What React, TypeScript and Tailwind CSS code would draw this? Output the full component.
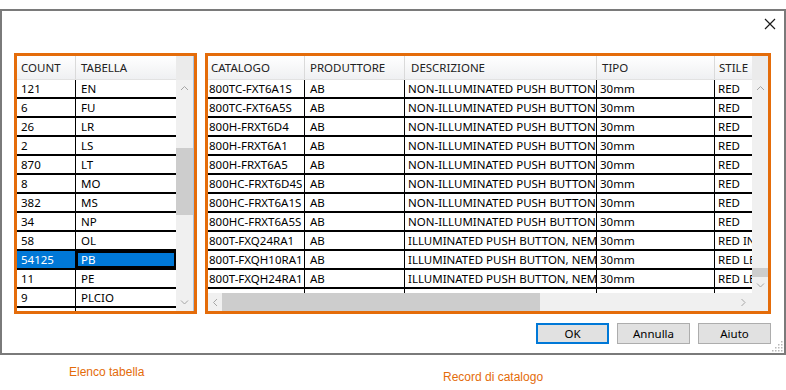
import React from "react";
import clsx from "clsx";

const tables = [
  ["121", "EN"],
  ["6", "FU"],
  ["26", "LR"],
  ["2", "LS"],
  ["870", "LT"],
  ["8", "MO"],
  ["382", "MS"],
  ["34", "NP"],
  ["58", "OL"],
  ["54125", "PB"],
  ["11", "PE"],
  ["9", "PLCIO"],
  ["4", "PS"],
];

const records = [
  ["800TC-FXT6A1S", "AB", "NON-ILLUMINATED PUSH BUTTON", "30mm", "RED"],
  ["800TC-FXT6A5S", "AB", "NON-ILLUMINATED PUSH BUTTON", "30mm", "RED"],
  ["800H-FRXT6D4", "AB", "NON-ILLUMINATED PUSH BUTTON", "30mm", "RED"],
  ["800H-FRXT6A1", "AB", "NON-ILLUMINATED PUSH BUTTON", "30mm", "RED"],
  ["800H-FRXT6A5", "AB", "NON-ILLUMINATED PUSH BUTTON", "30mm", "RED"],
  ["800HC-FRXT6D4S", "AB", "NON-ILLUMINATED PUSH BUTTON", "30mm", "RED"],
  ["800HC-FRXT6A1S", "AB", "NON-ILLUMINATED PUSH BUTTON", "30mm", "RED"],
  ["800HC-FRXT6A5S", "AB", "NON-ILLUMINATED PUSH BUTTON", "30mm", "RED"],
  ["800T-FXQ24RA1", "AB", "ILLUMINATED PUSH BUTTON, NEMA", "30mm", "RED INCANDESCENT"],
  ["800T-FXQH10RA1", "AB", "ILLUMINATED PUSH BUTTON, NEMA", "30mm", "RED LED"],
  ["800T-FXQH24RA1", "AB", "ILLUMINATED PUSH BUTTON, NEMA", "30mm", "RED LED"],
  ["800T-FXQ10RA1", "AB", "ILLUMINATED PUSH BUTTON, NEMA", "30mm", "RED INCANDESCENT"],
];

function Chevron({ dir }: { dir: "up" | "down" | "left" | "right" }) {
  const vertical = dir === "up" || dir === "down";
  const points = {
    up: "1,5 4.5,1.5 8,5",
    down: "1,1.5 4.5,5 8,1.5",
    left: "5,1 1.5,4.5 5,8",
    right: "1.5,1 5,4.5 1.5,8",
  }[dir];
  return (
    <svg width={vertical ? 9 : 7} height={vertical ? 7 : 9} viewBox={vertical ? "0 0 9 7" : "0 0 7 9"}>
      <polyline points={points} fill="none" stroke="#a6a6a6" strokeWidth="1" />
    </svg>
  );
}

export default function App() {
  return (
    <div className="w-[786px] h-[390px] bg-white font-['Noto_Sans',sans-serif] text-[11.5px] text-black">
      {/* Dialog window */}
      <div className="relative mt-[9px] w-[786px] h-[346px] border-2 border-[#7a7a7a] flex flex-col">
        {/* Title bar */}
        <div className="h-[42px] shrink-0 flex justify-end items-start pt-[7px] pr-[8px]">
          <svg width="12" height="12" viewBox="0 0 12 12">
            <path d="M1 1 L11 11 M11 1 L1 11" stroke="#1a1a1a" strokeWidth="1.2" />
          </svg>
        </div>

        {/* Panels */}
        <div className="flex gap-[8px] pl-[12px] shrink-0">
          {/* Elenco tabella */}
          <div className="w-[183px] h-[261px] border-[3px] border-[#e46c0a] flex">
            <div className="flex-1 overflow-hidden flex flex-col">
              <div className="h-[24px] shrink-0 flex bg-gradient-to-b from-white to-[#eff0f2] border-b border-[#e2e2e2] text-[#222]">
                <div className="w-[59px] pl-[4px] leading-[23px] border-r border-[#dadada]">COUNT</div>
                <div className="flex-1 pl-[5px] leading-[23px]">TABELLA</div>
              </div>
              {tables.map(([count, name]) => {
                const sel = name === "PB";
                return (
                  <div key={name} className="flex h-[19px] shrink-0">
                    <div
                      className={clsx(
                        "w-[59px] shrink-0 border-r border-b-2 border-black pl-[4px] leading-[17px] whitespace-nowrap overflow-hidden",
                        sel && "bg-[#0078d7] text-white"
                      )}
                    >
                      {count}
                    </div>
                    <div
                      className={clsx(
                        "w-[100px] shrink-0 border-b-2 border-black pl-[5px] leading-[17px] whitespace-nowrap overflow-hidden",
                        sel && "bg-[#0078d7] text-white shadow-[inset_0_0_0_2px_#000]"
                      )}
                    >
                      {name}
                    </div>
                  </div>
                );
              })}
            </div>
            <div className="w-[18px] shrink-0 bg-[#f0f0f0] flex flex-col border-r border-[#a9c2e0]">
              <div className="h-[24px] shrink-0 bg-[#ebebeb]" />
              <div className="h-[17px] shrink-0 flex items-center justify-center">
                <Chevron dir="up" />
              </div>
              <div className="flex-1 pt-[51px]">
                <div className="h-[67px] bg-[#cdcdcd]" />
              </div>
              <div className="h-[17px] shrink-0 flex items-center justify-center">
                <Chevron dir="down" />
              </div>
            </div>
          </div>

          {/* Record di catalogo */}
          <div className="w-[566px] h-[261px] border-[3px] border-[#e46c0a] flex flex-col">
            <div className="flex-1 flex min-h-0">
              <div className="flex-1 overflow-hidden flex flex-col">
                <div className="h-[24px] shrink-0 flex bg-gradient-to-b from-white to-[#eff0f2] border-b border-[#e2e2e2] text-[#222] whitespace-nowrap">
                  <div className="w-[97px] shrink-0 pl-[3px] leading-[23px] border-r border-[#dadada]">CATALOGO</div>
                  <div className="w-[100px] shrink-0 pl-[5px] leading-[23px] border-r border-[#dadada]">PRODUTTORE</div>
                  <div className="w-[192px] shrink-0 pl-[6px] leading-[23px] border-r border-[#dadada]">DESCRIZIONE</div>
                  <div className="w-[118px] shrink-0 pl-[5px] leading-[23px] border-r border-[#dadada]">TIPO</div>
                  <div className="w-[100px] shrink-0 pl-[4px] leading-[23px]">STILE</div>
                </div>
                {records.map(([cat, prod, desc, tipo, stile]) => (
                  <div key={cat} className="flex h-[19px] shrink-0 whitespace-nowrap">
                    <div className="w-[97px] shrink-0 border-r border-b-2 border-black pl-[1px] leading-[17px] overflow-hidden">{cat}</div>
                    <div className="w-[100px] shrink-0 border-r border-b-2 border-black pl-[5px] leading-[17px] overflow-hidden">{prod}</div>
                    <div className="w-[192px] shrink-0 border-r border-b-2 border-black pl-[3px] leading-[17px] overflow-hidden">{desc}</div>
                    <div className="w-[118px] shrink-0 border-r border-b-2 border-black pl-[3px] leading-[17px] overflow-hidden">{tipo}</div>
                    <div className="w-[100px] shrink-0 border-b-2 border-black pl-[3px] leading-[17px] overflow-hidden">{stile}</div>
                  </div>
                ))}
              </div>
              <div className="w-[16px] shrink-0 bg-[#f0f0f0] flex flex-col">
                <div className="h-[24px] shrink-0 bg-[#ebebeb]" />
                <div className="h-[17px] shrink-0 flex items-center justify-center">
                  <Chevron dir="up" />
                </div>
                <div className="flex-1 flex flex-col justify-end">
                  <div className="h-[9px] bg-[#cdcdcd]" />
                </div>
                <div className="h-[16px] shrink-0 flex items-center justify-center">
                  <Chevron dir="down" />
                </div>
              </div>
            </div>
            <div className="h-[18px] shrink-0 flex bg-[#f0f0f0]">
              <div className="w-[14px] shrink-0 flex items-center justify-center">
                <Chevron dir="left" />
              </div>
              <div className="w-[318px] shrink-0 bg-[#cdcdcd]" />
              <div className="flex-1" />
              <div className="w-[17px] shrink-0 flex items-center justify-center">
                <Chevron dir="right" />
              </div>
              <div className="w-[16px] shrink-0 bg-[#f0f0f0]" />
            </div>
          </div>
        </div>

        {/* Buttons */}
        <div className="mt-[9px] flex justify-end gap-[8px] pr-[13px]">
          <button className="w-[73px] h-[21px] bg-[#e1e1e1] border-2 border-[#0078d7] leading-none">OK</button>
          <button className="w-[73px] h-[21px] bg-[#e1e1e1] border border-[#adadad] leading-none">Annulla</button>
          <button className="w-[73px] h-[21px] bg-[#e1e1e1] border border-[#adadad] leading-none">Aiuto</button>
        </div>

        {/* Resize grip */}
        <svg className="absolute right-[1px] bottom-[1px]" width="11" height="11" viewBox="0 0 11 11">
          {[
            [9, 1], [9, 4], [6, 4], [9, 7], [6, 7], [3, 7], [9, 10], [6, 10], [3, 10], [0, 10],
          ].map(([x, y], i) => (
            <rect key={i} x={x} y={y - 1} width="1.5" height="1.5" fill="#b8b8b8" />
          ))}
        </svg>
      </div>

      {/* Captions */}
      <div className="flex items-start font-['Liberation_Sans',Arial,sans-serif] text-[12px] text-[#e46c0a]">
        <div className="w-[443px] pl-[69px] pt-[8px]">Elenco tabella</div>
        <div className="pt-[13px]">Record di catalogo</div>
      </div>
    </div>
  );
}
